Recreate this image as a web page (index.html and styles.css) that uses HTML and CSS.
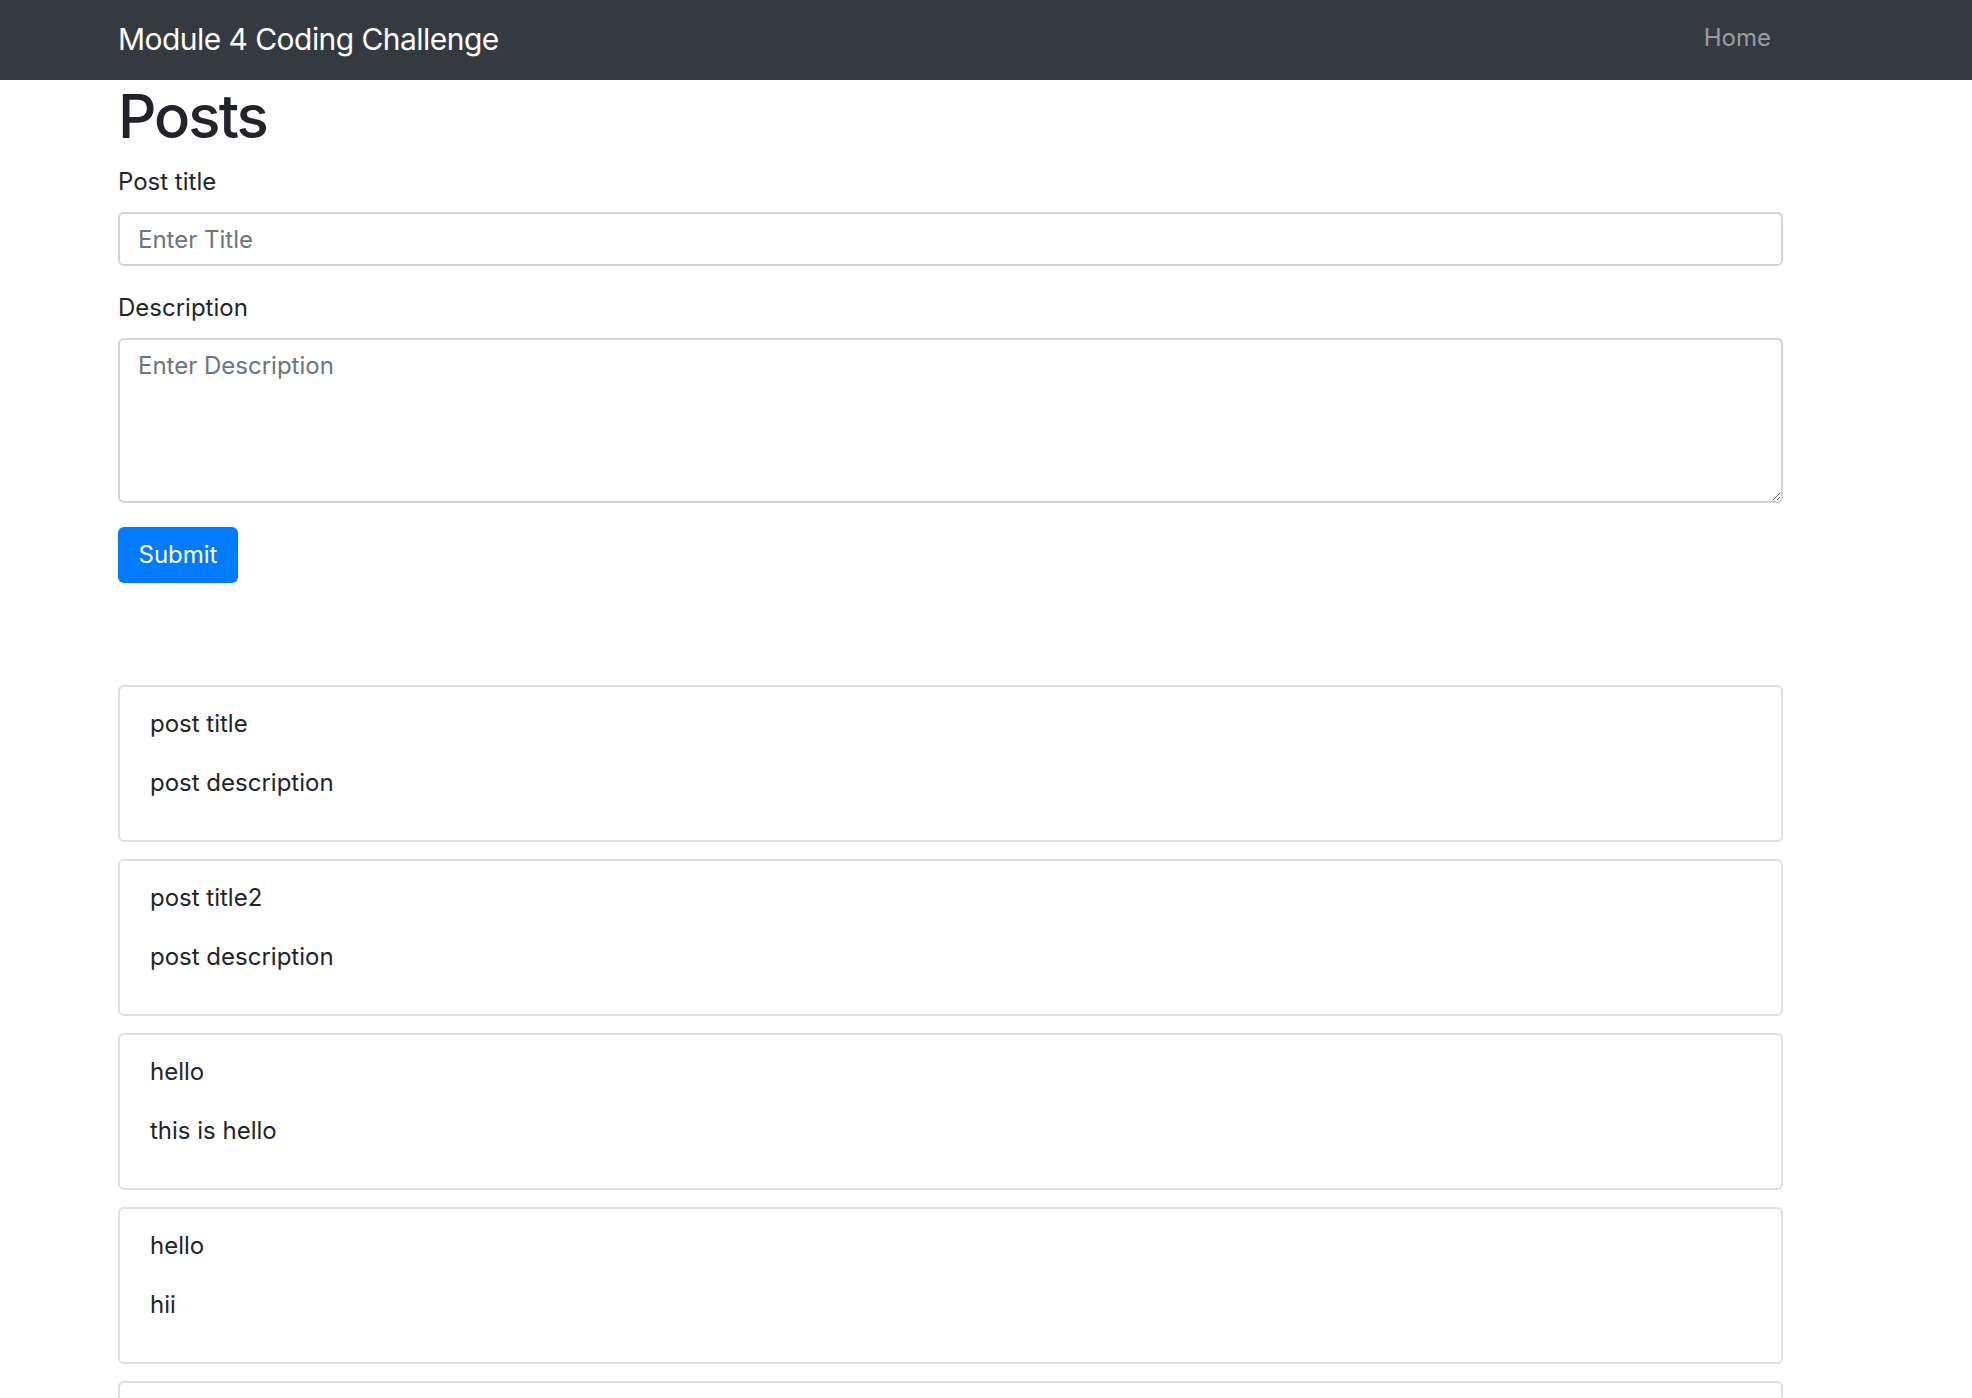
FILE: index.html
```html
<!DOCTYPE html>
<html lang="en">
<head>
<meta charset="utf-8">
<title>Module 4 Coding Challenge</title>
<link rel="stylesheet" href="styles.css">
</head>
<body>
<nav class="navbar">
  <div class="container nav-inner">
    <a class="brand" href="#">Module 4 Coding Challenge</a>
    <a class="nav-link" href="#">Home</a>
  </div>
</nav>
<main class="container">
  <h1 class="page-title">Posts</h1>
  <form class="post-form">
    <div class="form-group">
      <label class="form-label" for="title">Post title</label>
      <input class="form-control" id="title" type="text" placeholder="Enter Title">
    </div>
    <div class="form-group">
      <label class="form-label" for="desc">Description</label>
      <textarea class="form-control textarea" id="desc" rows="4" placeholder="Enter Description"></textarea>
    </div>
    <button class="btn-primary" type="button">Submit</button>
  </form>
  <div class="posts">
    <div class="card"><p>post title</p><p>post description</p></div>
    <div class="card"><p>post title2</p><p>post description</p></div>
    <div class="card"><p>hello</p><p>this is hello</p></div>
    <div class="card"><p>hello</p><p>hii</p></div>
    <div class="card card-empty"></div>
  </div>
</main>
</body>
</html>
```
FILE: styles.css
```css
* { box-sizing: border-box; }
html, body { margin: 0; padding: 0; }
body {
  font-family: Inter, "Noto Sans", "Liberation Sans", sans-serif;
  font-size: 24px;
  line-height: 36px;
  color: #212529;
  background: #fff;
}
.container {
  width: 1665px;
  margin-left: 118px;
}
.navbar {
  background: #343a40;
  height: 80px;
}
.nav-inner {
  height: 80px;
  display: flex;
  align-items: center;
  justify-content: space-between;
}
.brand {
  color: #fff;
  text-decoration: none;
  font-size: 30px;
  line-height: 45px;
  letter-spacing: -0.55px;
  margin-bottom: 2px;
}
.nav-link {
  color: rgba(255,255,255,.5);
  text-decoration: none;
  font-size: 24px;
  line-height: 36px;
  padding-right: 12px;
  margin-bottom: 4px;
}
.page-title {
  margin: 0 0 12px;
  font-size: 60px;
  line-height: 72px;
  font-weight: 500;
  letter-spacing: -2px;
}
.form-group { margin-bottom: 24px; }
.form-label {
  display: block;
  margin-bottom: 12px;
}
.form-control {
  display: block;
  width: 100%;
  height: 54px;
  padding: 8px 18px;
  font: inherit;
  color: #495057;
  border: 2px solid #ced4da;
  border-radius: 6px;
  background: #fff;
}
.form-control::placeholder { color: #6c757d; }
.textarea {
  height: 165px;
  padding-top: 8px;
  resize: vertical;
}
.btn-primary {
  display: block;
  width: 120px;
  height: 56px;
  padding: 0;
  font: inherit;
  color: #fff;
  background: #007bff;
  border: 0;
  border-radius: 6px;
}
.posts { margin-top: 102px; }
.card {
  border: 2px solid #dfdfdf;
  border-radius: 6px;
  padding: 19px 30px 16px;
  margin-bottom: 17px;
}
.card p {
  margin: 0 0 23px;
}
.card-empty { min-height: 157px; }
```
